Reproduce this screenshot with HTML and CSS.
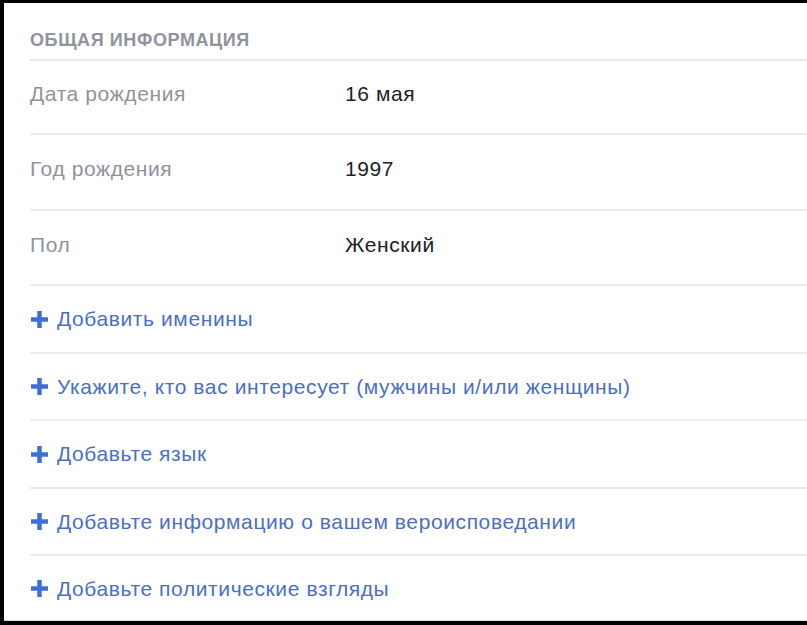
FILE: index.html
```html
<!DOCTYPE html>
<html lang="ru">
<head>
<meta charset="utf-8">
<link rel="stylesheet" href="styles.css">
</head>
<body>
<div class="panel">
  <div class="heading">ОБЩАЯ ИНФОРМАЦИЯ</div>
  <div class="row info r1"><span class="label">Дата рождения</span><span class="value">16 мая</span></div>
  <div class="row info r2"><span class="label">Год рождения</span><span class="value">1997</span></div>
  <div class="row info r3"><span class="label">Пол</span><span class="value">Женский</span></div>
  <div class="row add r4"><svg class="plus" viewBox="0 0 16 16"><path d="M8 0v16M0 8h16"/></svg><span class="link">Добавить именины</span></div>
  <div class="row add r5"><svg class="plus" viewBox="0 0 16 16"><path d="M8 0v16M0 8h16"/></svg><span class="link">Укажите, кто вас интересует (мужчины и/или женщины)</span></div>
  <div class="row add r6"><svg class="plus" viewBox="0 0 16 16"><path d="M8 0v16M0 8h16"/></svg><span class="link">Добавьте язык</span></div>
  <div class="row add r7"><svg class="plus" viewBox="0 0 16 16"><path d="M8 0v16M0 8h16"/></svg><span class="link">Добавьте информацию о вашем вероисповедании</span></div>
  <div class="row add last"><svg class="plus" viewBox="0 0 16 16"><path d="M8 0v16M0 8h16"/></svg><span class="link">Добавьте политические взгляды</span></div>
</div>
</body>
</html>
```
FILE: styles.css
```css
html, body {
  margin: 0;
  padding: 0;
  background: #000;
  height: 625px;
  overflow: hidden;
}
.panel {
  margin: 3px 0 0 4px;
  height: 618px;
  background: #fff;
  padding-left: 26px;
  font-family: "Liberation Sans", Arial, sans-serif;
  box-sizing: border-box;
  border-bottom: 1px solid #dcdcdc;
  overflow: hidden;
}
.heading {
  height: 58px;
  box-sizing: border-box;
  padding-top: 27px;
  font-size: 18px;
  letter-spacing: 0.6px;
  font-weight: bold;
  color: #8f939b;
  border-bottom: 2px solid #e9e9e9;
}
.row {
  display: flex;
  align-items: center;
  box-sizing: border-box;
  border-bottom: 2px solid #ececec;
  font-size: 21px;
  letter-spacing: 0.6px;
}
.info { padding-bottom: 6px; }
.r1 { height: 74px; }
.r2 { height: 76px; }
.r3 { height: 75px; }
.r4 { height: 68px; }
.r5 { height: 67px; }
.r6 { height: 68px; }
.r7 { height: 67px; }
.last { height: 65px; border-bottom: none; }
.label {
  width: 315px;
  color: #8f939b;
}
.value {
  color: #1d2129;
}
.plus {
  flex: none;
  width: 17px;
  height: 17px;
  margin: 0 9px 0 1px;
  fill: none;
  stroke: #3e6fd6;
  stroke-width: 4.2;
}
.link {
  color: #4a6fc8;
}
```
